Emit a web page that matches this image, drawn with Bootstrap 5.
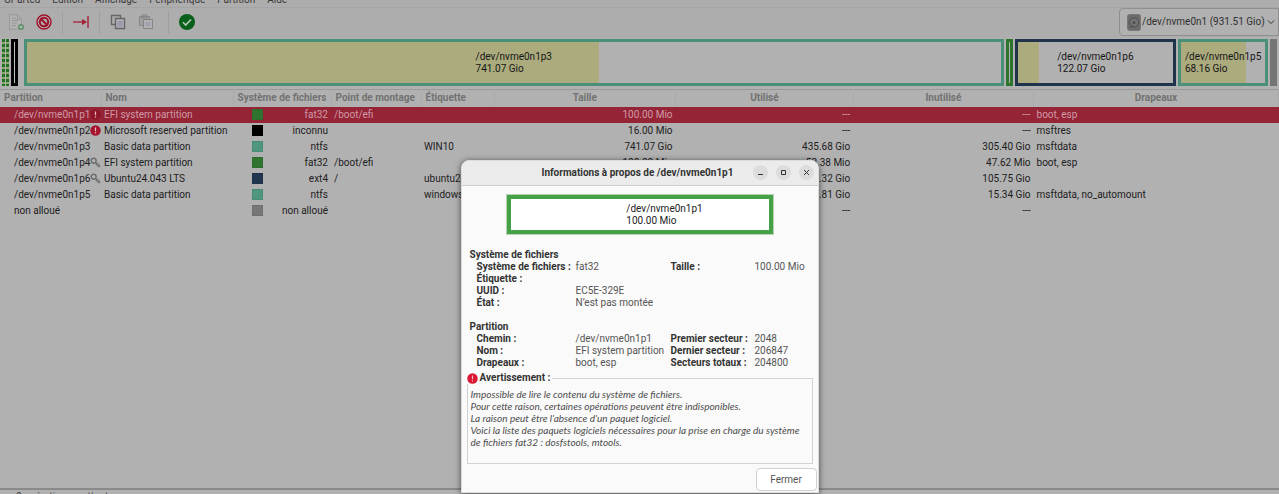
<!DOCTYPE html>
<html lang="fr">
<head>
<meta charset="utf-8">
<meta name="viewport" content="width=device-width, initial-scale=1">
<title>GParted</title>
<link rel="stylesheet" href="https://cdn.jsdelivr.net/npm/bootstrap@5.3.0/dist/css/bootstrap.min.css">
<style>
body{font:10px/12px Roboto,"Open Sans",sans-serif;background:#b1b1b1;color:#202020;min-height:100vh}
.menus{height:7px;background:#adadad;color:#3a3a3a;overflow:hidden;gap:12px;padding-left:4px}
.menus a{color:inherit;text-decoration:none;line-height:14px}
.tools{height:31px;background:#adadad;border-top:1px solid #a5a5a5;padding:0 0 2px 6px}
.tool{border:0;background:none;padding:0;width:20px;height:20px;line-height:0}
.tool svg{width:16px;height:16px}
.divide{width:1px;height:23px;background:#a0a0a0}
.device{width:160px;height:28px;border:1px solid #8e8e8e;border-radius:4px 0 0 4px;background:#b1b1b1;color:#303030;padding:0 3px 0 7px;gap:1px}
.device svg{flex:none}
.device select{appearance:none;border:0;background:none;font:inherit;color:inherit;padding:0;min-width:0;outline:0}
.disk{height:51px;padding:1px 2px 2px;gap:2px}
.seg{position:relative;height:47px;flex:0 0 7px;border:3px solid;color:#1c1c1c}
.seg.big{flex-basis:0}
.used{position:absolute;left:0;top:0;bottom:0;background:#abab7e}
.seg-label{position:relative;z-index:1;white-space:nowrap;color:#151515}
.teal{border-color:#4a9079;background-color:#b1b1b1}
.navy{border-color:#1f334c}
.green{border-color:#2d742d;background:#b1b1b1}
.ink{border-color:#000;background:#c0c0c0}
.dashed{border:0;background:linear-gradient(90deg,#0000 3px,#b1b1b1 3px 4px,#0000 4px),repeating-linear-gradient(#217321 0 3px,#8fa573 3px 5px)}
.parts{table-layout:fixed;width:100%;border-collapse:collapse;margin:0;border-top:1px solid #999}
.parts th{height:17px;padding:0 4px;color:#727272;font-weight:700;border-right:1px solid #aaa;white-space:nowrap}
.parts td{height:16px;padding:0 3px;line-height:16px;white-space:nowrap}
.parts td:first-child{padding:0 1px 0 14px}
.picked{background:#962437;color:#cf9ba5}
.num{text-align:right}
.swatch{display:inline-block;width:11px;height:11px;margin-left:16px;border:1px solid #0001}
.mark-icon{width:11px;height:11px;flex:none}
.statusbar{height:6px;border-top:2px solid #8a8a8a;overflow:hidden;padding-left:16px;line-height:14px;color:#444}
.info{position:absolute;left:50%;bottom:1px;width:358px;height:333px;transform:translateX(-50%);background:#fafafa;color:#333;border:1px solid #dcdcdc;border-radius:8px 8px 0 0;box-shadow:0 1px 6px #0009}
.titlebar{height:25px;background:#ebebeb;border-bottom:1px solid #d0d0d0;border-radius:8px 8px 0 0;padding:0 4px 1px 80px}
.titlebar h1{font:bold 10px/12px Roboto,sans-serif;margin:0;white-space:nowrap}
.wbtn{width:15px;height:15px;border:0;border-radius:50%;background:#dcdcdc;padding:0;line-height:0}
.wbtn svg{width:15px;height:15px}
.preview{width:268px;height:41px;margin:8px auto 14px 44px;border:5px solid #46a146;outline:1px solid #b9d0b9;outline-offset:-1px;background:#fff;color:#222;padding:1px 0 0 50px}
.info h2{font:bold 10px/12px Roboto,sans-serif;margin:0 0 0 8px}
.facts{display:grid;grid-template-columns:99px 95px 84px 1fr;margin:0 0 12px 15px;white-space:nowrap}
.facts dt,.facts dd{margin:0;height:12px}
.facts dd{color:#555}
.warn{margin:-9px 5px 0;height:92px;border:1px solid #d2d2d2;padding:0 3px;position:relative}
.warn legend{float:none;width:auto;font:bold 10px/12px Roboto,sans-serif;margin:0 0 4px -4px;padding:0 2px 0 0;gap:2px;display:flex;align-items:center}
.warn p{font-family:Lato,sans-serif;font-style:italic;color:#4c4c4c;margin:0;white-space:nowrap}
.shut{width:61px;height:23px;background:#fff;border:1px solid #d0d0d0;border-radius:4px;margin:4px 1px 0 auto;color:#555;padding:0;display:block}
</style>
</head>
<body class="d-flex flex-column overflow-hidden position-relative">
<svg class="d-none">
<symbol id="alert" viewBox="0 0 12 12"><circle cx="6" cy="6" r="5.7" fill="currentColor"/><path d="M6 2.6v4.2M6 8v1.4" stroke="#eebbc0" stroke-width="1.3"/></symbol>
<symbol id="keys" viewBox="0 0 12 12"><g fill="none" stroke="#707070"><circle cx="4" cy="4" r="2.7" stroke-width="1.7"/><path d="M6 6l5 4.5M7.5 8l-1 1M9.5 9.5l-1 1.3" stroke-width="1.5"/><path d="M6 4.5l5 4" stroke="#929292"/></g></symbol>
</svg>
<nav class="menus d-flex align-items-end"><a href="#">GParted</a><a href="#">Édition</a><a href="#">Affichage</a><a href="#">Périphérique</a><a href="#">Partition</a><a href="#">Aide</a></nav>
<div class="tools d-flex align-items-center">
<button class="tool" aria-label="Nouvelle"><svg viewBox="0 0 16 16"><path d="M1.5.8h8l4 4v10.4h-12z" fill="#b2b2b2" stroke="#989898"/><path d="M9.5 1v4h4M4 4h4M4 6.5h7M4 9h5M4 11.500h4" fill="none" stroke="#969696"/><circle cx="13" cy="13" r="3" fill="#628e6b"/><path d="M11.500 13h3M13 11.500v3" stroke="#b8c8ba"/></svg></button>
<button class="tool ms-2" aria-label="Supprimer"><svg viewBox="0 0 16 16"><circle cx="8" cy="8" r="7" fill="none" stroke="#a01029" stroke-width="1.4"/><circle cx="8" cy="8" r="4.200" fill="none" stroke="#a01029" stroke-width="2"/><path d="M4.500 4.500l7 7" stroke="#a01029" stroke-width="2"/></svg></button>
<span class="divide ms-2 me-2"></span>
<button class="tool" aria-label="Redimensionner"><svg viewBox="0 0 16 16"><path d="M0 8h10" stroke="#a52039" stroke-width="1.300"/><path d="M9 5l5 3-5 3z" fill="#a52039"/><path d="M15 2v12" stroke="#a52039" stroke-width="1.400"/></svg></button>
<span class="divide ms-2 me-2"></span>
<button class="tool" aria-label="Copier"><svg viewBox="0 0 16 16"><path d="M1.500 1.500h9v9h-9z" fill="none" stroke="#666" stroke-width="1.400"/><path d="M5.500 4.500h9v10h-9z" fill="#b1b1b1" stroke="#666" stroke-width="1.400"/><path d="M7.500 7h5v5.500h-5z" fill="#9999ad"/></svg></button>
<button class="tool ms-2 me-1" aria-label="Coller"><svg viewBox="0 0 16 16"><path d="M1.500 2.500h10v9h-10zM4 1h5v3H4z" fill="#a0a0a0" stroke="#858585"/><path d="M5.500 5.500h9v9h-9z" fill="#b1b1b1" stroke="#858585"/><path d="M7.500 8h5v4h-5z" fill="#a0a0b0"/></svg></button>
<span class="divide ms-2 me-2"></span>
<button class="tool" aria-label="Appliquer"><svg viewBox="0 0 16 16"><circle cx="8" cy="8" r="8" fill="#08601a"/><path d="M4 8.300l2.700 2.700 5.300-5.500" fill="none" stroke="#b9c9b9" stroke-width="1.600"/></svg></button>
<label class="device d-flex align-items-center ms-auto"><svg width="14" height="17" viewBox="0 0 14 17"><rect x=".5" y=".5" width="13" height="16" rx="2" fill="#6b6b6b" stroke="#777"/><circle cx="7" cy="8.500" r="4.500" fill="#757575" stroke="#4d4d4d"/><circle cx="7" cy="8.500" r="1.500" fill="#4d4d4d"/><path d="M3 14l3-3" stroke="#4d4d4d"/></svg>
<select class="flex-grow-1" aria-label="Périphérique"><option>/dev/nvme0n1 (931.51 Gio)</option></select><svg width="8" height="8" viewBox="0 0 8 8"><path d="M1 2.500l3 3 3-3" fill="none" stroke="#333"/></svg></label>
</div>
<div class="disk d-flex">
<div class="seg dashed"></div><div class="seg ink me-1"></div>
<div class="seg teal big d-flex align-items-center justify-content-center" style="flex-grow:976"><div class="used" style="width:58.8%"></div><div class="seg-label">/dev/nvme0n1p3<br>741.07 Gio</div></div>
<div class="seg green"></div>
<div class="seg navy big d-flex align-items-center justify-content-center" style="flex-grow:156"><div class="used" style="width:13.5%"></div><div class="seg-label">/dev/nvme0n1p6<br>122.07 Gio</div></div>
<div class="seg teal big d-flex align-items-center justify-content-center" style="flex-grow:84"><div class="used" style="width:77%"></div><div class="seg-label">/dev/nvme0n1p5<br>68.16 Gio</div></div>
<div class="seg" style="border-color:#757575;background:#757575"></div>
</div>
<table class="parts">
<colgroup><col style="width:101px"><col style="width:132px"><col style="width:98px"><col style="width:90px"><col style="width:73px"><col style="width:14.2%"><col style="width:13.9%"><col style="width:14.1%"><col></colgroup>
<thead><tr><th>Partition</th><th>Nom</th><th>Système de fichiers</th><th>Point de montage</th><th>Étiquette</th><th class="text-center">Taille</th><th class="text-center">Utilisé</th><th class="text-center">Inutilisé</th><th class="text-center">Drapeaux</th></tr></thead>
<tbody>
<tr class="picked"><td><div class="d-flex justify-content-between align-items-center">/dev/nvme0n1p1<svg class="mark-icon" style="color:#8e1529"><use href="#alert"/></svg></div></td><td>EFI system partition</td><td><div class="d-flex align-items-center justify-content-between"><i class="swatch" style="background:#2f752f"></i>fat32</div></td><td>/boot/efi</td><td></td><td class="num">100.00 Mio</td><td class="num">---</td><td class="num">---</td><td>boot, esp</td></tr>
<tr><td><div class="d-flex justify-content-between align-items-center">/dev/nvme0n1p2<svg class="mark-icon" style="color:#a5142d"><use href="#alert"/></svg></div></td><td>Microsoft reserved partition</td><td><div class="d-flex align-items-center justify-content-between"><i class="swatch" style="background:#000"></i>inconnu</div></td><td></td><td></td><td class="num">16.00 Mio</td><td class="num">---</td><td class="num">---</td><td>msftres</td></tr>
<tr><td>/dev/nvme0n1p3</td><td>Basic data partition</td><td><div class="d-flex align-items-center justify-content-between"><i class="swatch" style="background:#4f967f"></i>ntfs</div></td><td></td><td>WIN10</td><td class="num">741.07 Gio</td><td class="num">435.68 Gio</td><td class="num">305.40 Gio</td><td>msftdata</td></tr>
<tr><td><div class="d-flex justify-content-between align-items-center">/dev/nvme0n1p4<svg class="mark-icon"><use href="#keys"/></svg></div></td><td>EFI system partition</td><td><div class="d-flex align-items-center justify-content-between"><i class="swatch" style="background:#2f752f"></i>fat32</div></td><td>/boot/efi</td><td></td><td class="num">100.00 Mio</td><td class="num">52.38 Mio</td><td class="num">47.62 Mio</td><td>boot, esp</td></tr>
<tr><td><div class="d-flex justify-content-between align-items-center">/dev/nvme0n1p6<svg class="mark-icon"><use href="#keys"/></svg></div></td><td>Ubuntu24.043 LTS</td><td><div class="d-flex align-items-center justify-content-between"><i class="swatch" style="background:#20364f"></i>ext4</div></td><td>/</td><td>ubuntu24</td><td class="num"></td><td class="num">16.32 Gio</td><td class="num">105.75 Gio</td><td></td></tr>
<tr><td>/dev/nvme0n1p5</td><td>Basic data partition</td><td><div class="d-flex align-items-center justify-content-between"><i class="swatch" style="background:#4f967f"></i>ntfs</div></td><td></td><td>windows</td><td class="num"></td><td class="num">52.81 Gio</td><td class="num">15.34 Gio</td><td>msftdata, no_automount</td></tr>
<tr><td>non alloué</td><td></td><td><div class="d-flex align-items-center justify-content-between"><i class="swatch" style="background:#777"></i>non alloué</div></td><td></td><td></td><td class="num"></td><td class="num">---</td><td class="num">---</td><td></td></tr>
</tbody></table>
<footer class="statusbar mt-auto">0 opération en attente</footer>
<section class="info" role="dialog" aria-labelledby="dlg-title">
<div class="titlebar d-flex align-items-center"><h1 id="dlg-title">Informations à propos de /dev/nvme0n1p1</h1>
<div class="d-flex gap-2 ms-auto"><button class="wbtn" aria-label="Réduire"><svg viewBox="0 0 15 15"><path d="M5 9.500h5" stroke="#333"/></svg></button><button class="wbtn" aria-label="Agrandir"><svg viewBox="0 0 15 15"><path d="M5.500 5.500h4v4h-4z" fill="none" stroke="#333"/></svg></button><button class="wbtn" aria-label="Fermer la fenêtre"><svg viewBox="0 0 15 15"><path d="M5 5l5 5M10 5l-5 5" stroke="#333"/></svg></button></div></div>
<div class="preview d-flex align-items-center justify-content-center"><div>/dev/nvme0n1p1<br>100.00 Mio</div></div>
<h2>Système de fichiers</h2>
<dl class="facts"><dt>Système de fichiers :</dt><dd>fat32</dd><dt>Taille :</dt><dd>100.00 Mio</dd><dt>Étiquette :</dt><dd></dd><dt></dt><dd></dd><dt>UUID :</dt><dd>EC5E-329E</dd><dt></dt><dd></dd><dt>État :</dt><dd>N’est pas montée</dd></dl>
<h2>Partition</h2>
<dl class="facts"><dt>Chemin :</dt><dd>/dev/nvme0n1p1</dd><dt>Premier secteur :</dt><dd>2048</dd><dt>Nom :</dt><dd>EFI system partition</dd><dt>Dernier secteur :</dt><dd>206847</dd><dt>Drapeaux :</dt><dd>boot, esp</dd><dt>Secteurs totaux :</dt><dd>204800</dd></dl>
<fieldset class="warn"><legend><svg class="mark-icon" style="color:#dc1735"><use href="#alert"/></svg>Avertissement :</legend>
<p>Impossible de lire le contenu du système de fichiers.<br>Pour cette raison, certaines opérations peuvent être indisponibles.<br>La raison peut être l’absence d’un paquet logiciel.<br>Voici la liste des paquets logiciels nécessaires pour la prise en charge du système<br>de fichiers fat32 : dosfstools, mtools.</p></fieldset>
<button class="shut">Fermer</button>
</section>
<script src="https://cdn.jsdelivr.net/npm/bootstrap@5.3.0/dist/js/bootstrap.bundle.min.js"></script>
</body>
</html>
